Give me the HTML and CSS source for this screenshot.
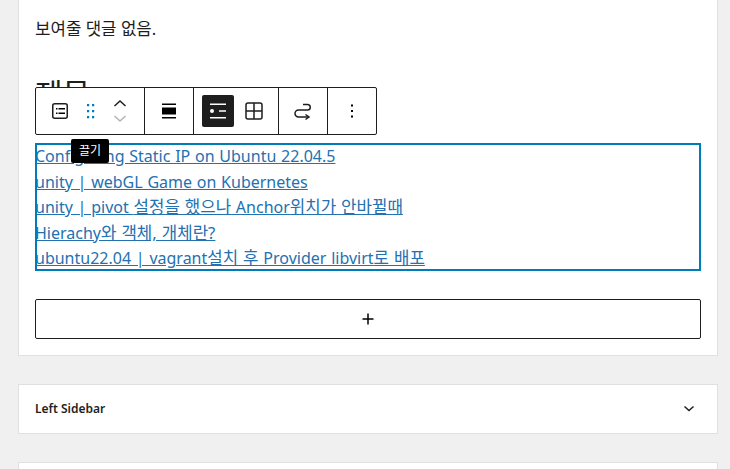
FILE: index.html
```html
<!DOCTYPE html>
<html lang="ko">
<head>
    <meta charset="UTF-8">
    <meta name="viewport" content="width=device-width, initial-scale=1.0">
    <title>Edit Post</title>
    <link rel="stylesheet" href="styles.css">
</head>
<body>

    <div class="editor-card">
        <p class="no-comments"><span class="ko">보여줄 댓글 없음.</span></p>
        <h2 class="block-title">제목</h2>

        <ul class="post-list">
            <li><a href="#">Configuring Static IP on Ubuntu 22.04.5</a></li>
            <li><a href="#">unity | webGL Game on Kubernetes</a></li>
            <li><a href="#">unity | pivot <span class="ko">설정을 했으나</span> Anchor<span class="ko">위치가 안바뀔때</span></a></li>
            <li><a href="#">Hierachy<span class="ko">와 객체, 개체란?</span></a></li>
            <li><a href="#">ubuntu22.04 | vagrant<span class="ko">설치 후</span> Provider libvirt<span class="ko">로 배포</span></a></li>
        </ul>

        <button class="add-block" aria-label="Add block">
            <svg width="24" height="24" viewBox="0 0 24 24"><path d="M11.25 6.500h1.500v4.750h4.750v1.500h-4.750v4.750h-1.500v-4.750H6.500v-1.500h4.750z"/></svg>
        </button>

        <div class="block-toolbar">
            <div class="toolbar-group group-block">
                <span class="tool-icon">
                    <svg width="24" height="24" viewBox="0 0 24 24"><rect x="4.750" y="4.750" width="14.500" height="14.500" rx="2" fill="none" stroke="#1e1e1e" stroke-width="1.500"/><path d="M8 9h1.500v1.500H8zM10.500 9H17v1.500h-6.500zM8 13.500h1.500V15H8zM10.500 13.500H17V15h-6.500z"/></svg>
                </span>
                <span class="drag-handle">
                    <svg width="12" height="20" viewBox="0 0 12 20" fill="#007cba"><path d="M2 3h2.200v2.200H2zM7 3h2.200v2.200H7zM2 9h2.200v2.200H2zM7 9h2.200v2.200H7zM2 15h2.200v2.200H2zM7 15h2.200v2.200H7z"/></svg>
                </span>
                <span class="movers">
                    <svg width="16" height="10" viewBox="0 0 16 10" fill="none" stroke="#1e1e1e" stroke-width="1.500"><path d="M2.500 8L8 3l5.500 5"/></svg>
                    <svg width="16" height="10" viewBox="0 0 16 10" fill="none" stroke="#b4b4b4" stroke-width="1.500"><path d="M2.500 2L8 7l5.500-5"/></svg>
                </span>
            </div>
            <div class="toolbar-group group-align">
                <span class="tool-icon">
                    <svg width="24" height="24" viewBox="0 0 24 24"><path d="M5 4.500h14V6H5zM5 8.500h14v7H5zM5 18h14v1.500H5z"/></svg>
                </span>
            </div>
            <div class="toolbar-group group-view">
                <span class="tool-icon is-active">
                    <svg width="24" height="24" viewBox="0 0 24 24" fill="#fff"><path d="M4 4.500h16V6H4zM4 18h16v1.500H4zM13 11.250h7v1.500h-7z"/><circle cx="6" cy="12" r="2"/></svg>
                </span>
                <span class="tool-icon">
                    <svg width="24" height="24" viewBox="0 0 24 24" fill="none" stroke="#1e1e1e" stroke-width="1.500"><rect x="4" y="4" width="16" height="16" rx="2"/><path d="M12 4v16M4 12h16"/></svg>
                </span>
            </div>
            <div class="toolbar-group group-transform">
                <span class="tool-icon">
                    <svg width="24" height="24" viewBox="0 0 24 24" fill="none" stroke="#1e1e1e" stroke-width="1.500"><path d="M12 5.500h4.500a2.750 2.750 0 0 1 0 5.500h-9a3.500 3.500 0 0 0 0 7H18"/><path d="M14.500 15.500l3.500 2.500-3.500 2.500"/></svg>
                </span>
            </div>
            <div class="toolbar-group group-more">
                <span class="tool-icon">
                    <svg width="24" height="24" viewBox="0 0 24 24"><path d="M11 5.500h2v2h-2zM11 11h2v2h-2zM11 16.500h2v2h-2z"/></svg>
                </span>
            </div>
        </div>

        <div class="tooltip">끌기</div>
    </div>

    <div class="meta-box">
        <h3>Left Sidebar</h3>
        <svg width="24" height="24" viewBox="0 0 24 24" fill="none" stroke="#1e1e1e" stroke-width="1.500"><path d="M7.500 9.500l4.500 4 4.500-4"/></svg>
    </div>

    <div class="meta-box"></div>

</body>
</html>
```

FILE: styles.css
```css
body {
    font-family: 'Noto Sans', 'Noto Sans CJK KR', sans-serif;
    background-color: #f0f0f0;
    color: #1e1e1e;
    margin: 0;
    height: 469px;
    overflow: hidden;
    padding: 0 12px 0 18px;
}
.ko {
    font-size: 16.8px;
    line-height: 1;
}
.editor-card {
    position: relative;
    height: 356px;
    box-sizing: border-box;
    background-color: #fff;
    border: 1px solid #e0e0e0;
    border-top: none;
    padding: 16px 16px 0;
}
.no-comments {
    font-size: 16px;
    line-height: 26px;
    margin: 0;
}
.block-title {
    font-size: 30px;
    line-height: 36px;
    font-weight: 400;
    margin: 34px 0 0;
    height: 12px;
}
.post-list {
    list-style: none;
    margin: 55px 0 0;
    padding: 0;
    outline: 2px solid #007cba;
    outline-offset: -2px;
}
.post-list li {
    font-size: 16px;
    line-height: 26px;
    height: 25.6px;
    word-spacing: 0.6px;
}
.post-list a {
    color: #2271b1;
}
.add-block {
    display: flex;
    justify-content: center;
    align-items: center;
    width: 100%;
    height: 40px;
    margin-top: 28px;
    background-color: #fff;
    border: 1px solid #1e1e1e;
    border-radius: 2px;
    padding: 0;
}
.block-toolbar {
    position: absolute;
    top: 87px;
    left: 16px;
    display: flex;
    height: 48px;
    box-sizing: border-box;
    background-color: #fff;
    border: 1px solid #1e1e1e;
    border-radius: 2px;
}
.toolbar-group {
    display: flex;
    align-items: center;
    justify-content: center;
    border-right: 1px solid #1e1e1e;
}
.toolbar-group:last-child {
    border-right: none;
}
.group-block {
    width: 108px;
    justify-content: flex-start;
}
.group-block .tool-icon {
    margin-left: 8px;
}
.group-align {
    width: 48px;
}
.group-view {
    width: 84px;
    gap: 4px;
}
.group-transform {
    width: 48px;
}
.group-more {
    width: 48px;
}
.tool-icon {
    display: flex;
    align-items: center;
    justify-content: center;
    width: 32px;
    height: 32px;
    border-radius: 2px;
}
.tool-icon.is-active {
    background-color: #1e1e1e;
}
.drag-handle {
    display: flex;
    margin-left: 9px;
}
.movers {
    display: flex;
    flex-direction: column;
    gap: 6px;
    margin-left: 15px;
}
.tooltip {
    position: absolute;
    top: 139px;
    left: 52px;
    background-color: #000;
    color: #fff;
    font-size: 12px;
    line-height: 16px;
    padding: 4px 8px;
    border-radius: 2px;
}
.meta-box {
    display: flex;
    align-items: center;
    justify-content: space-between;
    height: 50px;
    box-sizing: border-box;
    background-color: #fff;
    border: 1px solid #e0e0e0;
    margin-top: 28px;
    padding: 0 16px;
}
.meta-box h3 {
    font-size: 12px;
    font-weight: 600;
    margin: 0 0 2px;
}
```
